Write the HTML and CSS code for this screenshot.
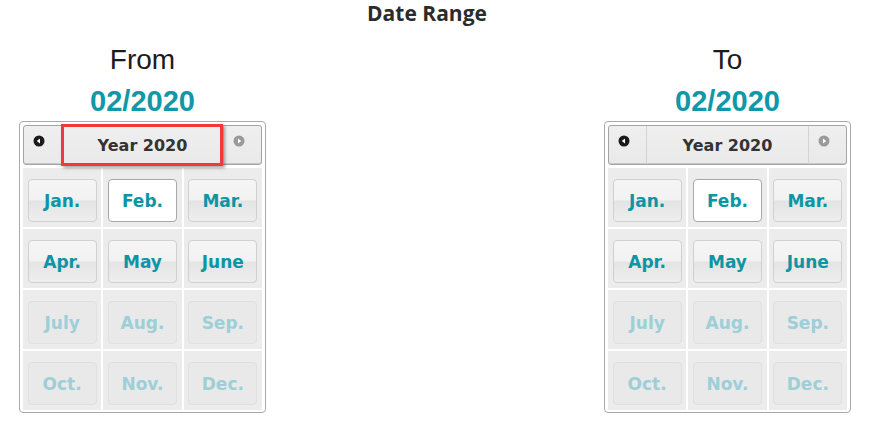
FILE: index.html
```html
<!DOCTYPE html>
<html lang="en">
<head>
<meta charset="utf-8">
<title>Date Range</title>
<link rel="stylesheet" href="styles.css">
</head>
<body>
<div class="page">
  <h1 class="title">Date Range</h1>
  <div class="ranges">
    <section class="range">
      <h2 class="label">From</h2>
      <div class="value">02/2020</div>
      <div class="picker">
        <div class="picker-header">
          <span class="nav prev"><svg width="12" height="12" viewBox="0 0 12 12"><circle cx="6" cy="6" r="5.5" fill="#1a1a1a"/><polygon points="3.8,6 7,3.6 7,8.4" fill="#fff"/></svg></span>
          <span class="year highlighted">Year 2020</span>
          <span class="nav next disabled"><svg width="12" height="12" viewBox="0 0 12 12"><circle cx="6" cy="6" r="5.5" fill="#9a9a9a"/><polygon points="8.2,6 5,3.6 5,8.4" fill="#fff"/></svg></span>
        </div>
        <div class="months">
          <div class="cell"><span class="month">Jan.</span></div>
          <div class="cell"><span class="month current">Feb.</span></div>
          <div class="cell"><span class="month">Mar.</span></div>
          <div class="cell"><span class="month">Apr.</span></div>
          <div class="cell"><span class="month">May</span></div>
          <div class="cell"><span class="month">June</span></div>
          <div class="cell"><span class="month off">July</span></div>
          <div class="cell"><span class="month off">Aug.</span></div>
          <div class="cell"><span class="month off">Sep.</span></div>
          <div class="cell"><span class="month off">Oct.</span></div>
          <div class="cell"><span class="month off">Nov.</span></div>
          <div class="cell"><span class="month off">Dec.</span></div>
        </div>
      </div>
    </section>
    <section class="range">
      <h2 class="label">To</h2>
      <div class="value">02/2020</div>
      <div class="picker">
        <div class="picker-header">
          <span class="nav prev"><svg width="12" height="12" viewBox="0 0 12 12"><circle cx="6" cy="6" r="5.5" fill="#1a1a1a"/><polygon points="3.8,6 7,3.6 7,8.4" fill="#fff"/></svg></span>
          <span class="year">Year 2020</span>
          <span class="nav next disabled"><svg width="12" height="12" viewBox="0 0 12 12"><circle cx="6" cy="6" r="5.5" fill="#9a9a9a"/><polygon points="8.2,6 5,3.6 5,8.4" fill="#fff"/></svg></span>
        </div>
        <div class="months">
          <div class="cell"><span class="month">Jan.</span></div>
          <div class="cell"><span class="month current">Feb.</span></div>
          <div class="cell"><span class="month">Mar.</span></div>
          <div class="cell"><span class="month">Apr.</span></div>
          <div class="cell"><span class="month">May</span></div>
          <div class="cell"><span class="month">June</span></div>
          <div class="cell"><span class="month off">July</span></div>
          <div class="cell"><span class="month off">Aug.</span></div>
          <div class="cell"><span class="month off">Sep.</span></div>
          <div class="cell"><span class="month off">Oct.</span></div>
          <div class="cell"><span class="month off">Nov.</span></div>
          <div class="cell"><span class="month off">Dec.</span></div>
        </div>
      </div>
    </section>
  </div>
</div>
</body>
</html>
```
FILE: styles.css
```css
html, body {
  margin: 0;
  padding: 0;
  background: #fff;
}

.page {
  width: 884px;
  height: 435px;
  box-sizing: border-box;
  padding: 0 33px 0 19px;
}

.title {
  margin: 0;
  padding-right: 16px;
  text-align: center;
  font-family: "Open Sans", sans-serif;
  font-weight: 700;
  font-size: 21px;
  line-height: 26px;
  color: #2b2b2b;
}

.ranges {
  display: flex;
  justify-content: space-between;
}

.range {
  width: 247px;
  text-align: center;
}

.label {
  margin: 18px 0 0;
  font-family: "Liberation Sans", Arial, sans-serif;
  font-weight: 400;
  font-size: 28px;
  line-height: 32px;
  color: #1c1c1c;
}

.value {
  margin-top: 7px;
  font-family: "Liberation Sans", Arial, sans-serif;
  font-weight: 700;
  font-size: 29px;
  line-height: 36px;
  color: #0f98a7;
}

.picker {
  margin-top: 2px;
  box-sizing: border-box;
  width: 247px;
  border: 1px solid #a9a9a9;
  border-radius: 4px;
  padding: 3px 3px 2px;
  background: #fff;
}

.picker-header {
  display: flex;
  height: 40px;
  box-sizing: border-box;
  border: 1px solid #a4a4a4;
  border-radius: 3px;
  background: linear-gradient(#efefef, #e9e9e9);
  box-shadow: inset 0 -1px 0 #c8c8c8;
}

.nav {
  width: 38px;
  flex: none;
  box-sizing: border-box;
  padding: 9px 0 0 9px;
  text-align: left;
}

.nav svg {
  display: block;
}

.prev {
  border-right: 1px solid #d2d2d2;
}

.next {
  border-left: 1px solid #d2d2d2;
  padding-left: 9px;
}

.year {
  flex: 1;
  position: relative;
  display: flex;
  align-items: center;
  justify-content: center;
  font-family: "DejaVu Sans", Verdana, sans-serif;
  font-weight: 700;
  font-size: 16px;
  color: #333;
}

.year.highlighted::after {
  content: "";
  position: absolute;
  left: -1px;
  right: 0;
  top: -2px;
  bottom: -2px;
  border: 3px solid #f0393b;
  box-shadow: 2px 2px 3px rgba(0, 0, 0, 0.35);
}

.months {
  margin-top: 3px;
  display: grid;
  grid-template-columns: repeat(3, 1fr);
  grid-auto-rows: 59px;
  gap: 2px;
}

.cell {
  background: #ececec;
  display: flex;
  justify-content: center;
  align-items: flex-end;
  padding-bottom: 5px;
}

.month {
  box-sizing: border-box;
  width: 69px;
  height: 43px;
  border: 1px solid #d0d0d0;
  border-radius: 4px;
  background: linear-gradient(#f5f5f5 0%, #f2f2f2 48%, #e4e4e4 52%, #eeeeee 100%);
  display: flex;
  align-items: center;
  justify-content: center;
  font-family: "DejaVu Sans", Verdana, sans-serif;
  font-weight: 700;
  font-size: 17px;
  color: #0b95a5;
}

.month.current {
  background: #fff;
  border-color: #a8a8a8;
}

.month.off {
  background: #e9e9e9;
  border-color: #e0e0e0;
  color: #9ccfd7;
}
```
